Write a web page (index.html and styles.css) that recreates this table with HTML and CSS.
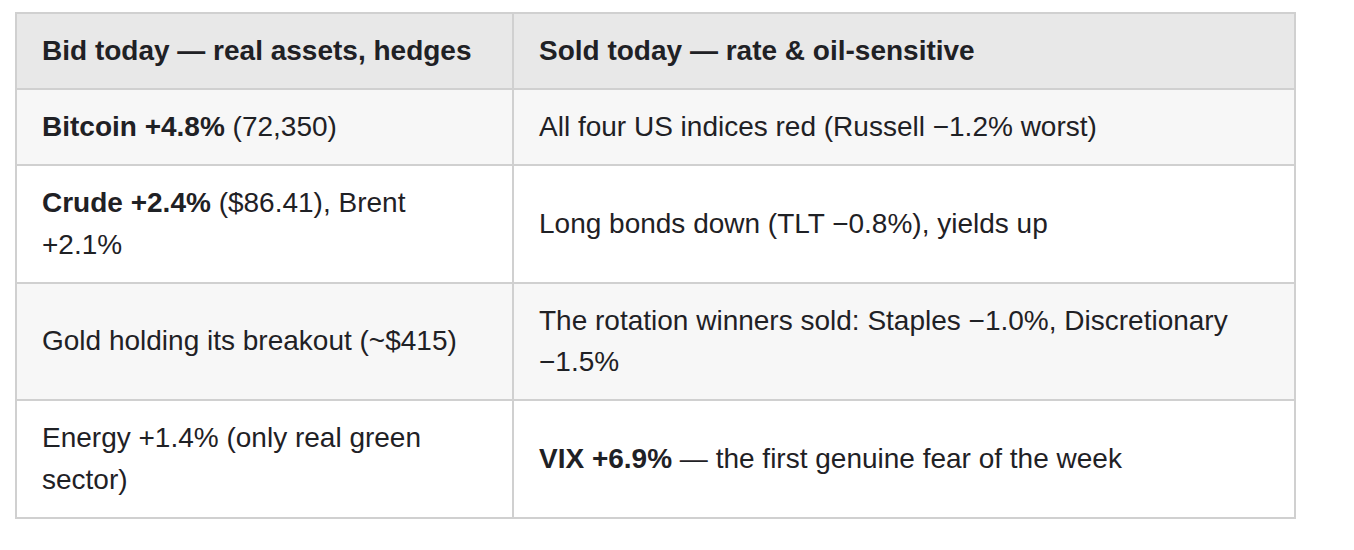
FILE: index.html
```html
<!DOCTYPE html>
<html lang="en">
<head>
<meta charset="utf-8">
<title>Bid vs Sold today</title>
<link rel="stylesheet" href="styles.css">
</head>
<body>
<table class="market-table">
  <colgroup>
    <col class="col-bid">
    <col class="col-sold">
  </colgroup>
  <thead>
    <tr>
      <th>Bid today — real assets, hedges</th>
      <th>Sold today — rate &amp; oil-sensitive</th>
    </tr>
  </thead>
  <tbody>
    <tr>
      <td><strong>Bitcoin +4.8%</strong> (72,350)</td>
      <td>All four US indices red (Russell −1.2% worst)</td>
    </tr>
    <tr>
      <td><strong>Crude +2.4%</strong> ($86.41), Brent +2.1%</td>
      <td>Long bonds down (TLT −0.8%), yields up</td>
    </tr>
    <tr>
      <td>Gold holding its breakout (~$415)</td>
      <td>The rotation winners sold: Staples −1.0%, Discretionary −1.5%</td>
    </tr>
    <tr>
      <td>Energy +1.4% (only real green sector)</td>
      <td><strong>VIX +6.9%</strong> — the first genuine fear of the week</td>
    </tr>
  </tbody>
</table>
</body>
</html>
```
FILE: styles.css
```css
html, body {
  margin: 0;
  background: #ffffff;
}
body {
  padding: 12px 0 0 15px;
  font-family: "Liberation Sans", Arial, Helvetica, sans-serif;
  color: #1f2125;
}
.market-table {
  border-collapse: collapse;
  table-layout: fixed;
  width: 1279px;
  font-size: 28px;
  line-height: 41.5px;
}
.col-bid { width: 497px; }
.col-sold { width: 782px; }
.market-table th,
.market-table td {
  border: 2px solid #d0d0d0;
  padding: 16px 25px 16.5px 25px;
  text-align: left;
  vertical-align: middle;
}
.market-table th {
  background: #e8e8e8;
  font-weight: 700;
}
.market-table tbody tr:nth-child(odd) td {
  background: #f7f7f7;
}
.market-table tbody tr:nth-child(even) td {
  background: #ffffff;
}
.market-table strong {
  font-weight: 700;
}
```
